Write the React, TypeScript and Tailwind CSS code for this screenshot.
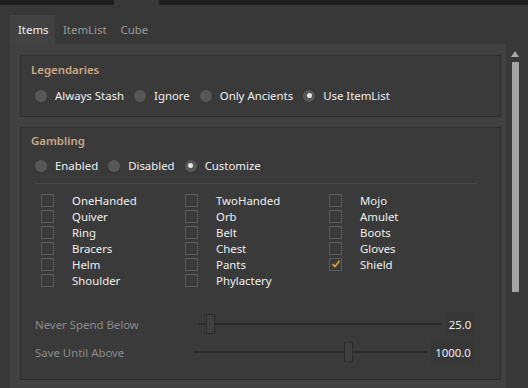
import React from "react";

const font = { fontFamily: '"Noto Sans", "Open Sans", sans-serif' };

function Radio({ label, checked }: { label: string; checked?: boolean }) {
  return (
    <div className="flex items-center gap-[8px]">
      <span className="flex h-[12px] w-[12px] items-center justify-center rounded-full bg-[#575757]">
        {checked && <span className="h-[5px] w-[5px] rounded-full bg-[#e6e6e6]" />}
      </span>
      <span className="text-[11.4px] text-[#f0f0f0]">{label}</span>
    </div>
  );
}

function Check({ label, checked }: { label: string; checked?: boolean }) {
  return (
    <div className="flex h-[16px] items-center">
      <span className="flex h-[13px] w-[13px] items-center justify-center border border-[#5c5c5c] bg-[#3a3a3a]">
        {checked && (
          <svg width="10" height="10" viewBox="0 0 10 10">
            <path d="M1.5 5.2 L4 7.6 L8.6 1.8" fill="none" stroke="#e2a32c" strokeWidth="1.6" />
          </svg>
        )}
      </span>
      <span className="ml-[18px] text-[11.4px] leading-none text-[#f0f0f0]">{label}</span>
    </div>
  );
}

function Slider({ label, value, trackStart, trackEnd, thumb, boxW }: { label: string; value: string; trackStart: number; trackEnd: number; thumb: number; boxW: number }) {
  return (
    <div className="flex h-[28px] items-center">
      <span className="w-[159px] text-[11.4px] text-[#8c8c8c]">{label}</span>
      <div className="relative h-[24px]" style={{ marginLeft: trackStart - 192, width: trackEnd - trackStart }}>
        <div className="absolute left-0 right-0 top-[11px] h-[2px] bg-[#2a2a2a]" />
        <div className="absolute top-[2px] h-[20px] w-[9px] border border-[#2b2b2b] bg-[#3f3f3f]" style={{ left: thumb - trackStart }} />
      </div>
      <div className="ml-auto flex h-[24px] items-center justify-center bg-[#373737] text-[11.4px] text-[#f0f0f0]" style={{ width: boxW }}>
        {value}
      </div>
    </div>
  );
}

export default function App() {
  const cols = [
    ["OneHanded", "Quiver", "Ring", "Bracers", "Helm", "Shoulder"],
    ["TwoHanded", "Orb", "Belt", "Chest", "Pants", "Phylactery"],
    ["Mojo", "Amulet", "Boots", "Gloves", "Shield"],
  ];
  return (
    <div className="relative h-[388px] w-[528px] overflow-hidden bg-[#383838]" style={font}>
      <div className="flex h-[5px]">
        <div className="w-[114px] bg-[#1e1e1e]" />
        <div className="w-[45px]" />
        <div className="flex-1 bg-[#1e1e1e]" />
      </div>
      <div className="ml-[10px] mt-[10px] flex h-[29px] items-center text-[11.4px]">
        <div className="flex h-full w-[45px] items-center bg-[#424242] pl-[8px] text-[#f2f2f2]">Items</div>
        <div className="pl-[8px] pr-[14px] text-[#9a9a9a]">ItemList</div>
        <div className="text-[#9a9a9a]">Cube</div>
      </div>
      <div className="flex">
        <div className="ml-[10px] h-[360px] w-[496px] bg-[#414141] pl-[10px] pt-[11px]">
          <div className="h-[62px] w-[481px] border border-[#2e2e2e] bg-[#3a3a3a] pl-[14px] pt-[5px]">
            <div className="ml-[-4px] text-[11.4px] font-semibold text-[#d1a87f]">Legendaries</div>
            <div className="mt-[9px] flex items-center gap-[10px]">
              <Radio label="Always Stash" />
              <Radio label="Ignore" />
              <Radio label="Only Ancients" />
              <Radio label="Use ItemList" checked />
            </div>
          </div>
          <div className="mt-[10px] h-[253px] w-[481px] border border-[#2e2e2e] bg-[#3a3a3a] pl-[14px] pt-[4px]">
            <div className="ml-[-4px] text-[11.4px] font-semibold text-[#c9ab88]">Gambling</div>
            <div className="mt-[8px] flex items-center gap-[10px]">
              <Radio label="Enabled" />
              <Radio label="Disabled" />
              <Radio label="Customize" checked />
            </div>
            <div className="mt-[9px] h-px w-[442px] bg-[#474747]" />
            <div className="ml-[6px] mt-[8px] flex">
              {cols.map((c, i) => (
                <div key={i} className="w-[144px]">
                  {c.map((l) => (
                    <Check key={l} label={l} checked={l === "Shield"} />
                  ))}
                </div>
              ))}
            </div>
            <div className="mt-[22px] w-[440px]">
              <Slider label="Never Spend Below" value="25.0" trackStart={196} trackEnd={440} thumb={204} boxW={30} />
              <Slider label="Save Until Above" value="1000.0" trackStart={192} trackEnd={425} thumb={342} boxW={44} />
            </div>
          </div>
        </div>
        <div className="ml-[3px] flex w-[12px] flex-col items-center">
          <svg width="10" height="8" viewBox="0 0 10 8" className="mt-[6px]">
            <path d="M5 1 L9 7 L1 7 Z" fill="#a8a8a8" />
          </svg>
          <div className="mt-[4px] h-[230px] w-[7px] bg-[#a3a3a3]" />
        </div>
      </div>
    </div>
  );
}
